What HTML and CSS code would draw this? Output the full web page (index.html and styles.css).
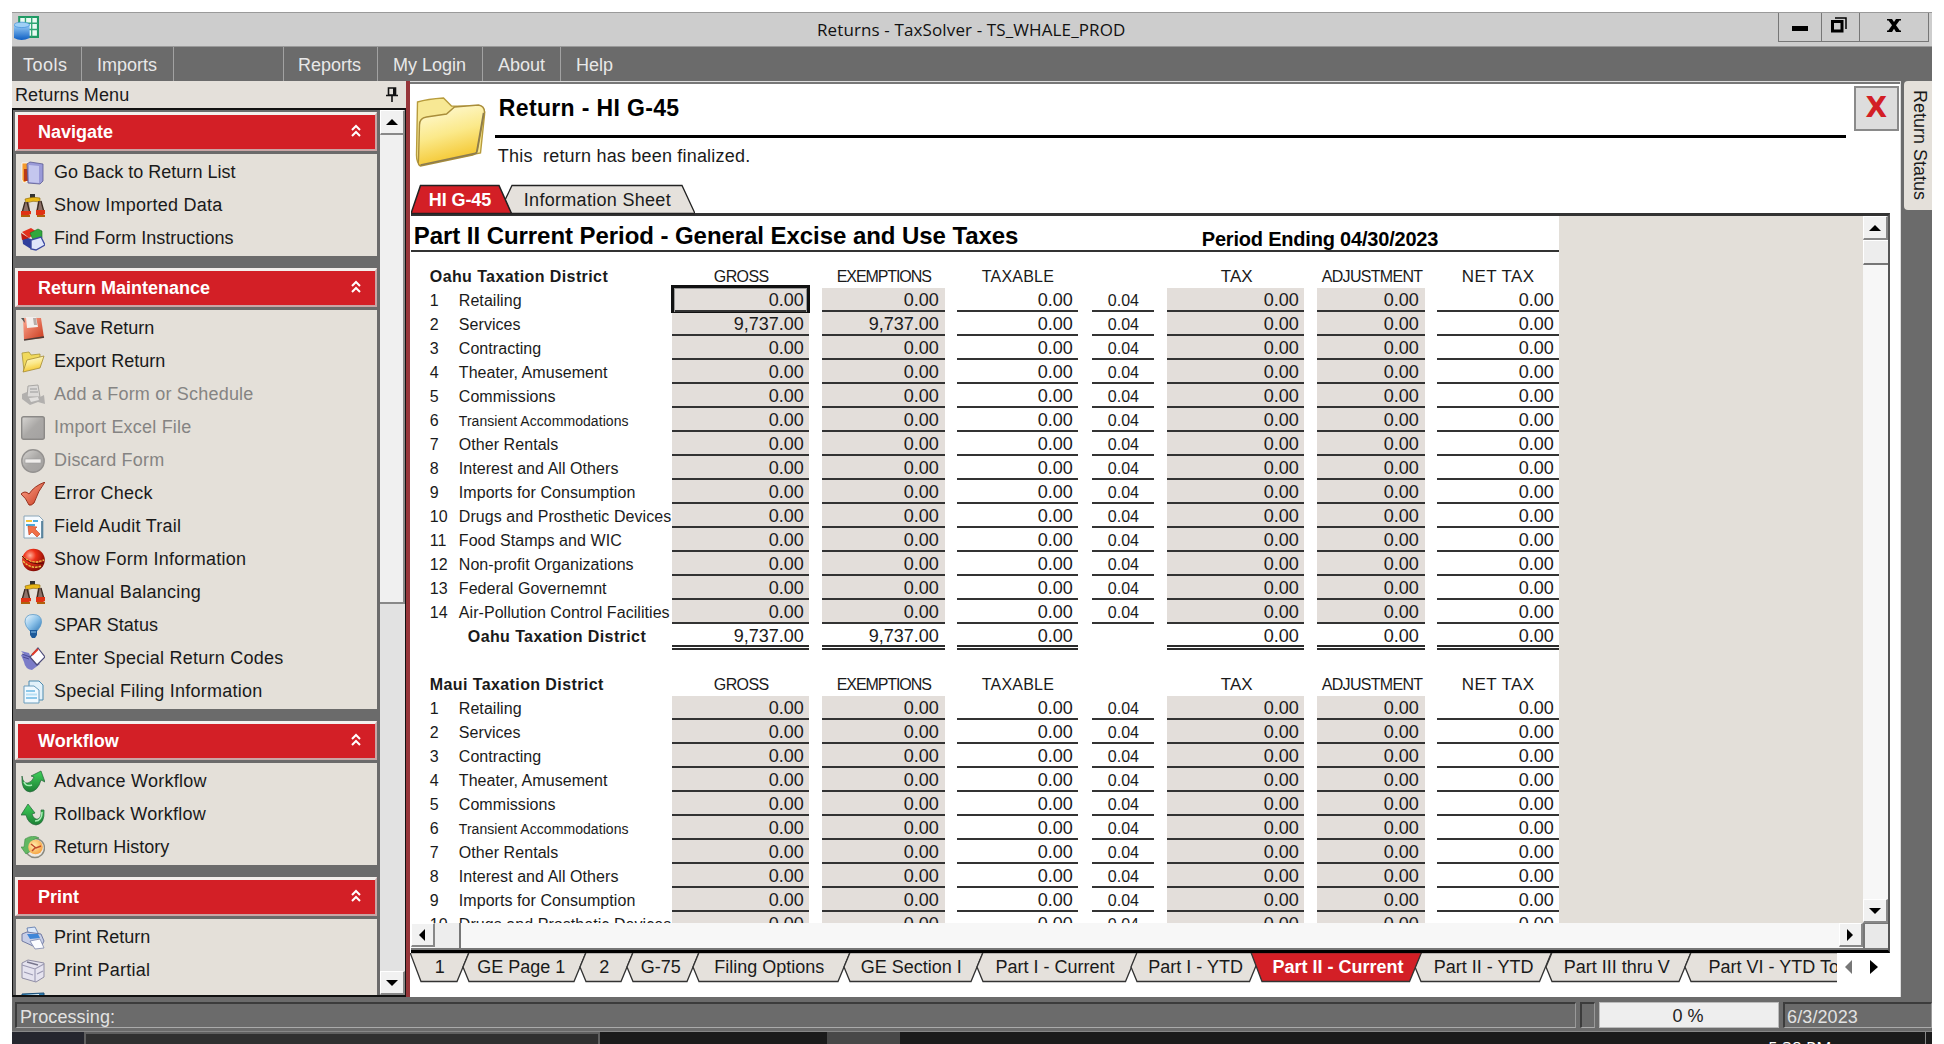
FILE: index.html
```html
<!DOCTYPE html>
<html lang="en">
<head>
<meta charset="utf-8">
<title>Returns - TaxSolver</title>
<link rel="stylesheet" href="styles.css">
</head>
<body>
<svg class="defs" width="0" height="0" aria-hidden="true">
  <defs>
    <linearGradient id="gFolder" x1="0" y1="0" x2="0.3" y2="1"><stop offset="0" stop-color="#fffce0"/><stop offset=".55" stop-color="#fbe98a"/><stop offset="1" stop-color="#f4c62e"/></linearGradient>
    <linearGradient id="gBlue" x1="0" y1="0" x2="0" y2="1"><stop offset="0" stop-color="#9fd2f8"/><stop offset="1" stop-color="#0f5fc4"/></linearGradient>
    <linearGradient id="gBulb" x1="0" y1="0" x2="1" y2="1"><stop offset="0" stop-color="#f4fbff"/><stop offset=".5" stop-color="#8fc4ea"/><stop offset="1" stop-color="#2f78b8"/></linearGradient>
    <linearGradient id="gRed" x1="0" y1="0" x2="1" y2="1"><stop offset="0" stop-color="#ffa890"/><stop offset="1" stop-color="#c8381c"/></linearGradient>
    <linearGradient id="gGreen" x1="0" y1="0" x2="0" y2="1"><stop offset="0" stop-color="#3fd05a"/><stop offset="1" stop-color="#1c7f34"/></linearGradient>
    <linearGradient id="gGray" x1="0" y1="0" x2="1" y2="1"><stop offset="0" stop-color="#d8d6d3"/><stop offset=".5" stop-color="#aaa8a6"/><stop offset="1" stop-color="#a3a1a0"/></linearGradient>
    <radialGradient id="gBall" cx=".35" cy=".3" r=".75"><stop offset="0" stop-color="#ffb09a"/><stop offset=".35" stop-color="#ee3018"/><stop offset="1" stop-color="#7e0a05"/></radialGradient>
    <radialGradient id="gClock" cx=".4" cy=".4" r=".7"><stop offset="0" stop-color="#fff0b0"/><stop offset="1" stop-color="#f59a35"/></radialGradient>
    <symbol id="chev" viewBox="0 0 10 13"><path d="M1 6 5 2l4 4M1 12l4-4 4 4" fill="none" stroke="#fff" stroke-width="2"/></symbol>
    <symbol id="scales" viewBox="0 0 24 24"><path d="M9 0h5v4H9z" fill="#333"/><path d="M4 5q8-3 15-1v4q-7-2-14 1z" fill="#e9b818" stroke="#8a6200" stroke-width=".6"/><path d="M4 8 1 18h8L8 8zM17 7l-2 11h8L20 7z" fill="#8d7168"/><path d="M4 8 1 19M6 8l3 11M18 7l-2 11M20 7l3 11" stroke="#3a2a20" stroke-width="1.300"/><path d="M0 17h10v3q-5 3-10 1zM15 16h9v4q-4 3-9 1z" fill="#e03214"/><path d="M0 21h9v2H0zM16 21h8v2h-8z" fill="#b0600c"/></symbol>
  </defs>
</svg>
<div class="window">
  <header class="titlebar">
    <svg class="app-icon" viewBox="0 0 24 24"><path d="M5 1h18v19H5z" fill="#eafaf2" stroke="#1f9a63" stroke-width="2"/><path d="M11 1v19M17 1v19M5 7h18M5 13h18" stroke="#2fa673" stroke-width="1.300"/><path d="M0 8v13q7 4 15 0V8z" fill="url(#gBlue)"/><ellipse cx="7.500" cy="8.500" rx="7.500" ry="2.600" fill="#9fd0f5" stroke="#3a8ad8" stroke-width=".6"/></svg>
    <h1 class="window-title">Returns - TaxSolver - TS_WHALE_PROD</h1>
    <div class="window-buttons">
      <span class="wb min"><svg width="16" height="6"><path d="M0 0h16v5H0z"/></svg></span>
      <span class="wb restore"><svg width="16" height="16" viewBox="0 0 16 16"><path d="M4 1h11v11" fill="none" stroke="#000" stroke-width="1.500"/><path d="M1.500 4.500h9.500v9.500H1.500z" fill="none" stroke="#000" stroke-width="3"/></svg></span>
      <span class="wb close"><svg width="14" height="13" viewBox="0 0 14 13"><path d="M0 0h5l2 3 2-3h5v1.500h-1.500L9 6.300l3.800 5.200H14V13H9L7 9.700 5 13H0v-1.500h1.300L5 6.300 1.500 1.500H0z"/></svg></span>
    </div>
  </header>

  <nav class="menubar">
    <span class="m tools">Tools</span><span class="m imports">Imports</span><span class="m blank"></span><span class="m reports">Reports</span><span class="m login">My Login</span><span class="m about">About</span><span class="m help">Help</span>
  </nav>

  <div class="workspace">
    <aside class="sidebar">
      <div class="side-head"><span>Returns Menu</span>
        <svg width="12" height="15" viewBox="0 0 12 15"><path d="M2.500 1h7v7h-7zM0 8.500h12M6 8v7" fill="none" stroke="#111" stroke-width="1.600"/><path d="M7 1h2.500v7H7z" fill="#111"/></svg>
      </div>
      <div class="side-body">
        <div class="groups">
          <h2 class="group-head">Navigate<svg class="chev"><use href="#chev"/></svg></h2>
          <ul class="group">
            <li class="tight"><svg viewBox="0 0 24 24"><path d="M1 2h7v17l-5 3-2-3z" fill="#f59a2c" stroke="#fff" stroke-width=".8"/><path d="M3 8h4v12H3z" fill="#b93a18"/><path d="m6 3 3-2 13 2v17l-3 3-12-1z" fill="#9a9ad8" stroke="#5b5a92" stroke-width=".8"/><path d="m8 4 10 1v17L8 21z" fill="#c4c6ee"/></svg>Go Back to Return List</li>
            <li><svg><use href="#scales"/></svg>Show Imported Data</li>
            <li class="tight"><svg viewBox="0 0 24 24"><path d="m1 5 9-4 6 4-8 6z" fill="#e3301c"/><path d="m9 6 8-4 4 2v7l-8 4z" fill="#31a83c" stroke="#156e22" stroke-width=".6"/><path d="m1 9 9 3v10L2 17z" fill="#2f3f9c"/><path d="m0 6 8 5-7 2z" fill="#c01a10"/><path d="m10 13 10-3 4 8-9 5-5-1z" fill="#dfe6fb" stroke="#3c4aa0" stroke-width="1.400"/></svg>Find Form Instructions</li>
          </ul>
          <h2 class="group-head">Return Maintenance<svg class="chev"><use href="#chev"/></svg></h2>
          <ul class="group">
            <li class="tight"><svg viewBox="0 0 24 24"><path d="m2 1 18 0 3 20-20 2z" fill="url(#gRed)"/><path d="m3 23 20-3" stroke="#4c3c38" stroke-width="1.600"/><path d="m5 0 10-0 2 10-11 1z" fill="#f2efed"/><path d="M12 1h3l1 7h-3z" fill="#b6aca8"/><path d="M0 1h3l1 5z" fill="#555"/></svg>Save Return</li>
            <li class="tight"><svg viewBox="0 0 24 24"><path d="m1 3 7-1 2 3 9-1v5L3 21z" fill="#f1d95c" stroke="#a89436" stroke-width=".8"/><path d="m6 10 17-4-4 12-17 4z" fill="url(#gFolder)" stroke="#a38a34" stroke-width=".8"/></svg>Export Return</li>
            <li class="off"><svg viewBox="0 0 24 24"><path d="m7 3 10-1 2 12H6z" fill="#dcdad8" stroke="#a9a7a4"/><path d="M9 6h7M9 9h8" stroke="#999" stroke-width="1.200"/><path d="m1 11 5-2v5h13l4-2 1 9-7-2-8 3-8-6z" fill="#b2b0ae"/><path d="m8 15 9-1 1 3-8 2z" fill="#e2e0de"/></svg>Add a Form or Schedule</li>
            <li class="off"><svg viewBox="0 0 24 24"><rect x=".7" y=".7" width="22.600" height="22.600" rx="2" fill="url(#gGray)" stroke="#8b8987" stroke-width="1.400"/></svg>Import Excel File</li>
            <li class="off"><svg viewBox="0 0 24 24"><circle cx="12" cy="12" r="11.200" fill="url(#gGray)" stroke="#949290" stroke-width="1.400"/><rect x="4" y="10" width="16" height="4" fill="#efedeb" stroke="#999" stroke-width=".6"/></svg>Discard Form</li>
            <li><svg viewBox="0 0 24 24"><path d="M0 12q4-4 8 0Q13 4 24 0 17 9 13 21q-3 3-5 2Q5 16 0 12z" fill="url(#gRed)" stroke="#8e2210" stroke-width=".9"/></svg>Error Check</li>
            <li><svg viewBox="0 0 24 24"><path d="M3 1h15l4 4v18H3z" fill="#f6fbff" stroke="#8aa6b8"/><path d="M5 5h6v2H5z" fill="#f4c33c"/><path d="M5 9h9v2H5zM12 5h5v2h-5z" fill="#49a9dc"/><path d="M21 6v17" stroke="#3a6b8a" stroke-width="1.500"/><path d="m7 11 9 1-2 2 5 5-3 3-5-5-3 3z" fill="#f07048" stroke="#c2401e" stroke-width=".6"/></svg>Field Audit Trail</li>
            <li><svg viewBox="0 0 24 24"><circle cx="12.500" cy="12" r="11.300" fill="url(#gBall)"/><path d="M2 9q9 8 21 3M2 13q8 9 19 5" fill="none" stroke="#ecc24a" stroke-width="1.500" stroke-dasharray="2.500 1"/><path d="M1 8q8 10 22 7" fill="none" stroke="#5c0a04" stroke-width="1"/></svg>Show Form Information</li>
            <li><svg><use href="#scales"/></svg>Manual Balancing</li>
            <li class="tight"><svg viewBox="0 0 24 24"><path d="M12 .5q8.500 0 8.500 7.500 0 4-4.500 9H9Q4 12 4 8q0-7.500 8-7.500z" fill="url(#gBulb)" stroke="#5d9bc8" stroke-width=".8"/><path d="M9 16h7v5l-2 3h-3l-2-3z" fill="#1d5a9a"/><path d="M10 18h5" stroke="#8cc4ee"/></svg>SPAR Status</li>
            <li><svg viewBox="0 0 24 24"><path d="m0 4 8 2 2 5 9 6-8 6q-7-1-8-8L0 8l3-1z" fill="#7b7cc8"/><path d="m1 7 8 3M2 10l6 2" stroke="#4a4b96"/><path d="m17 1 7 9-8 8-7-8z" fill="#fdfdff" stroke="#4b4a78" stroke-width="1.200"/><path d="m11 8 6-6" stroke="#e03a28" stroke-width="2"/></svg>Enter Special Return Codes</li>
            <li><svg viewBox="0 0 24 24"><path d="M8 1h10l4 4v15H8z" fill="#e2f1fa" stroke="#4c8bb0"/><path d="M3 6h10l5 4v13H3z" fill="#f0f9ff" stroke="#6a9dbd"/><path d="M5 11h9M5 18h11" stroke="#8cc8ea" stroke-width="2"/><path d="M5 14.500h11" stroke="#b9e0f4" stroke-width="2"/></svg>Special Filing Information</li>
          </ul>
          <h2 class="group-head">Workflow<svg class="chev"><use href="#chev"/></svg></h2>
          <ul class="group">
            <li><svg viewBox="0 0 24 24"><path d="M1 6q1 8 6 7 4-1 6-6l-3-1 10-5 4 11-4-2Q17 21 9 22 0 21 1 6z" fill="url(#gGreen)" stroke="#25633a" stroke-width=".7"/><path d="M3 12q2 5 8 3" stroke="#a6ecb4" stroke-width="1.500" fill="none"/></svg>Advance Workflow</li>
            <li><svg viewBox="0 0 24 24"><path d="M23 7q1 14-8 15Q7 21 5 12H0L7 1l7 9-3 1q2 6 6 5 4-2 3-9z" fill="url(#gGreen)" stroke="#25633a" stroke-width=".7"/><path d="M21 9q0 9-7 9" stroke="#a6ecb4" stroke-width="1.500" fill="none"/></svg>Rollback Workflow</li>
            <li class="tight"><svg viewBox="0 0 24 24"><circle cx="14" cy="12" r="9.500" fill="#ece9e2" stroke="#8a8a80" stroke-width="1.500"/><path d="M4 3q8-5 14-1Q9 3 8 11l2 4-5 3-5-7h3z" fill="#62b862" stroke="#3c8a44" stroke-width=".6"/><circle cx="14.500" cy="11" r="7.300" fill="url(#gClock)"/><path d="m10 8 5 4 5-2M14 12l-3 3" stroke="#c0492a" stroke-width="1.500" fill="none"/></svg>Return History</li>
          </ul>
          <h2 class="group-head">Print<svg class="chev"><use href="#chev"/></svg></h2>
          <ul class="group">
            <li class="tight"><svg viewBox="0 0 24 24"><path d="m6 2 8-1 4 8-10 2z" fill="#dce9fa" stroke="#5672a8" stroke-width=".8"/><path d="m1 8 5-2 14 2 3 7-2 4-9 1-11-5z" fill="#c7cee6" stroke="#66709c" stroke-width=".9"/><path d="m6 8 11 0 2 4-10 1z" fill="#3f86d8"/><path d="m9 15 10-2 4 9-9 1z" fill="#fbfcff" stroke="#7c86ac" stroke-width=".8"/></svg>Print Return</li>
            <li><svg viewBox="0 0 24 24"><path d="m1 4 6-3 16 3v14l-8 5-14-4z" fill="#e5e3ef" stroke="#8f8da4" stroke-width="1"/><path d="m1 6 13 4 9-5M14 10v13M3 13l9 3M16 15l6-3" stroke="#9b99b2" fill="none" stroke-width="1.100"/><path d="m6 3 11 3" stroke="#77758c" stroke-width="1.400"/></svg>Print Partial</li>
            <li><svg viewBox="0 0 24 24"><path d="m1 2 22-1 0 21H1z" fill="#2a7fb4" stroke="#1c4f78"/><path d="m4 3 14-1v4H4z" fill="#e8f4fb"/></svg></li>
          </ul>
        </div>
        <div class="vbar side-bar">
          <span class="sb-btn"><i class="tri up"></i></span>
          <span class="side-thumb"></span>
          <span class="sb-space"></span>
          <span class="sb-btn"><i class="tri down"></i></span>
        </div>
      </div>
    </aside>

    <main class="main">
      <div class="return-head">
        <svg class="folder" viewBox="0 0 72 70"><path d="M3 5q10-3 26-4l8 8q16 0 28 1 6 1 5 8l-4 38-60 12Q2 66 2 58z" fill="#f7e894" stroke="#b89c3c" stroke-width="1.400"/><path d="M5 28q0-7 7-8l20-3 8-7 24-2q6 1 6 7l-7 38q-1 4-5 5L6 69q-3-1-2-6z" fill="url(#gFolder)" stroke="#a98d3a" stroke-width="1.400"/><path d="m6 68 56-12 7-40" fill="none" stroke="#8c7c50" stroke-width="1.500"/></svg>
        <div class="return-info">
          <h2>Return - HI G-45</h2>
          <p>This  return has been finalized.</p>
        </div>
        <button class="close-form" type="button">X</button>
      </div>

      <div class="top-tabs">
        <svg class="tab-shapes" width="284" height="31" viewBox="0 0 284 31"><path d="M94 16 101 1.500H271L284 29.500H100z" fill="#e5e1dc" stroke="#222" stroke-width="1.300"/><path d="M0 29.500 9.500 1.500H88L100.500 29.500z" fill="#d31f26" stroke="#222" stroke-width="1.500"/></svg>
        <span class="tab-on">HI G-45</span><span class="tab-info">Information Sheet</span>
      </div>

      <div class="viewer">
        <div class="scroll-area">
          <section class="sheet">
            <div class="sheet-title"><h3>Part II Current Period - General Excise and Use Taxes</h3><h4>Period Ending 04/30/2023</h4></div>
            <div class="rows" id="rows"></div>
            <div class="selection"></div>
          </section>
          <div class="backdrop"></div>
          <div class="vbar form-vbar">
            <span class="sb-btn"><i class="tri up"></i></span>
            <span class="form-vthumb"></span>
            <span class="sb-space"></span>
            <span class="sb-btn"><i class="tri down"></i></span>
          </div>
        </div>
        <div class="hbar">
          <span class="sb-btn"><i class="tri left"></i></span>
          <span class="form-hthumb"></span>
          <span class="sb-space"></span>
          <span class="sb-btn"><i class="tri right"></i></span>
          <span class="corner"></span>
        </div>
      </div>

      <div class="sheet-tabs">
        <div class="strip" id="strip"></div>
        <i class="tri left dim"></i><i class="tri right"></i>
      </div>
    </main>

    <div class="right-dock"><span class="dock-tab">Return Status</span></div>
  </div>

  <footer class="statusbar">
    <span class="cell processing">Processing:</span>
    <span class="cell tiny"></span>
    <span class="cell percent">0 %</span>
    <span class="cell date">6/3/2023</span>
  </footer>
  <div class="taskbar">
    <span class="tk start"></span><span class="tk search"></span><span class="tk"></span><span class="tk active"></span>
    <span class="clock">5:38 PM</span><span class="peek"></span>
  </div>
</div>
<script src="app.js"></script>
</body>
</html>
```
FILE: styles.css
```css
* { box-sizing: border-box; }
body {
  margin: 0;
  width: 1944px;
  height: 1044px;
  overflow: hidden;
  background: #fff;
  font-family: "Liberation Sans", Arial, sans-serif;
  font-size: 18px;
  color: #1a1a1a;
}
h1, h2, h3, h4, p, ul { margin: 0; padding: 0; }
ul { list-style: none; }
.defs { position: absolute; }

.window {
  width: 1920px;
  height: 1032px;
  margin: 12px 0 0 12px;
  display: flex;
  flex-direction: column;
  background: #6b6b6b;
}

/* title bar */
.titlebar {
  height: 35px;
  flex: none;
  display: flex;
  align-items: flex-start;
  background: #cdcdcd;
  border-top: 1px solid #9a9a9a;
  border-bottom: 1px solid #999;
}
.app-icon { width: 25px; height: 25px; margin: 3px 0 0 2px; }
.window-title {
  flex: 1;
  padding-left: 778px;
  font: 400 17px/33px "Open Sans", sans-serif;
  letter-spacing: 0.12px;
  color: #111;
}
.window-buttons {
  display: flex;
  width: 151px;
  height: 29px;
  margin-right: 3px;
  border: 1px solid #777;
  border-top: 0;
}
.wb { display: flex; align-items: center; justify-content: center; padding-bottom: 3px; }
.min { width: 42px; padding-top: 7px; }
.restore { width: 39px; border: solid #777; border-width: 0 1px; padding: 0 3px 4px 0; }
.close { flex: 1; }

/* menu bar */
.menubar { height: 34px; flex: none; display: flex; color: #e8e8e8; line-height: 37px; }
.m { border-right: 1px solid #a2a2a2; padding-left: 15px; }
.tools { width: 70px; padding-left: 11px; letter-spacing: 0.5px; }
.imports { width: 92px; }
.blank { width: 110px; }
.reports { width: 94px; padding-left: 14px; }
.login { width: 105px; }
.about { width: 78px; }
.help { border: 0; }

.workspace { flex: 1; display: flex; min-height: 0; }

/* sidebar */
.sidebar { width: 394px; display: flex; flex-direction: column; }
.side-head {
  height: 27px;
  flex: none;
  display: flex;
  justify-content: space-between;
  align-items: center;
  padding: 0 8px 0 3px;
  line-height: 26px;
  letter-spacing: 0.1px;
  background: #e4e0da;
}
.side-body {
  flex: 1;
  min-height: 0;
  display: flex;
  justify-content: space-between;
  border: 1px solid #111;
  border-top-width: 2px;
  border-bottom-width: 2px;
}
.groups { width: 364px; padding: 2px 0 0 2px; overflow: hidden; }
.group-head {
  height: 39px;
  width: 362px;
  display: flex;
  justify-content: space-between;
  align-items: center;
  padding: 1px 14px 0 20px;
  background: #d31f26;
  border: solid #f3efec;
  border-width: 3px 2px 2px 3px;
  border-right-color: #c9a5a5;
  border-bottom-color: #c9a5a5;
  font-size: 18px;
  font-weight: 700;
  color: #fff;
}
.chev { width: 10px; height: 13px; margin-top: -5px; }
.group { margin: 3px 0 12px 1px; width: 361px; padding: 2px 0 1px; background: #e4e0d9; }
.group li { height: 33px; display: flex; align-items: center; gap: 9px; padding-left: 5px; white-space: nowrap; letter-spacing: 0.25px; }
.group li svg { width: 24px; height: 24px; flex: none; }
.group .tight { letter-spacing: 0.02px; }
.group .off { color: #858483; letter-spacing: 0.2px; }

/* scroll bars */
.vbar, .hbar { display: flex; }
.vbar { flex-direction: column; }
.sb-space { flex: 1; }
.sb-btn {
  width: 24px;
  height: 24px;
  flex: none;
  display: flex;
  align-items: center;
  justify-content: center;
  background: #f1f1f1;
  border: solid #fff;
  border-width: 1px 2px 2px 1px;
  border-right-color: #888;
  border-bottom-color: #888;
}
.tri { width: 0; height: 0; border: 6px solid transparent; }
.up { border-top: 0; border-bottom-color: #000; }
.down { border-bottom: 0; border-top-color: #000; }
.left { border-width: 6px 6px 6px 0; border-right-color: #000; }
.right { border-width: 6px 0 6px 6px; border-left-color: #000; }
.side-bar { width: 25px; background: #e2e2e2; }
.side-bar .sb-btn { width: 25px; }
.side-bar .sb-btn:first-child { height: 25px; }
.side-thumb { height: 469px; background: #f0f0f0; border: solid #888; border-width: 0 2px 2px 0; }

/* main panel */
.main {
  width: 1495px;
  display: flex;
  flex-direction: column;
  background: #fff;
  border-left: 4px solid #963539;
  box-shadow: inset 0 1px #ddd, inset 0 3px #777;
}
.return-head { height: 104px; flex: none; display: flex; padding-top: 5px; }
.folder { width: 73px; height: 70px; margin: 11px 0 0 4px; }
.return-info { width: 1351px; margin-left: 8px; }
.return-info h2 {
  height: 52px;
  padding: 8px 0 0 4px;
  border-bottom: 3px solid #000;
  font-size: 23px;
  line-height: 28px;
  letter-spacing: 0.35px;
  color: #000;
}
.return-info p { padding: 8px 0 0 3px; line-height: 21px; white-space: pre; letter-spacing: 0.2px; }
.close-form {
  width: 45px;
  height: 45px;
  margin-left: 8px;
  padding: 0 0 2px;
  background: #ddd;
  border: 2px solid #8a8a8a;
  font: 700 28px/38px "DejaVu Sans", sans-serif;
  color: #d31f26;
}
.top-tabs { height: 28px; flex: none; position: relative; line-height: 31px; white-space: nowrap; padding-left: 19px; letter-spacing: 0.3px; }
.tab-shapes { position: absolute; left: 1px; top: -1px; }
.top-tabs span { position: relative; }
.tab-on { display: inline-block; width: 95px; font-weight: 700; color: #fff; letter-spacing: -0.1px; }
.viewer { width: 1479px; height: 740px; flex: none; margin-left: 1px; border-top: 3px solid #333; border-right: 2px solid #555; border-bottom: 3px solid #000; }
.scroll-area { height: 707px; display: flex; overflow: hidden; }
.sheet { width: 1148px; position: relative; flex: none; }
.sheet-title { height: 36px; display: flex; border-bottom: 2px solid #333; color: #000; white-space: nowrap; }
.sheet-title h3 { width: 788px; padding: 4px 0 0 3px; font-size: 24px; line-height: 32px; letter-spacing: -0.06px; }
.sheet-title h4 { padding: 10px 0 0 3px; font-size: 20px; line-height: 26px; letter-spacing: -0.2px; }
.rows { padding-top: 12px; }
.row {
  display: grid;
  grid-template-columns: 29px 213px 137px 13px 123px 12px 121px 14px 62px 13px 137px 13px 108px 12px 122px;
  height: 24px;
  padding-left: 19px;
  line-height: 25px;
  white-space: nowrap;
}
.row span { height: 24px; }
.num { grid-column: 1; font-size: 16px; }
.label { grid-column: 2; font-size: 16px; line-height: 26px; letter-spacing: 0.06px; }
.small { font-size: 14px; }
.c-gross { grid-column: 3; }
.c-exempt { grid-column: 5; }
.c-taxable { grid-column: 7; }
.c-rate { grid-column: 9; }
.c-tax { grid-column: 11; }
.c-adjust { grid-column: 13; }
.c-net { grid-column: 15; }
.line .amount { text-align: right; padding-right: 5px; border-bottom: 2px solid #333; }
.line .c-exempt, .line .c-adjust { padding-right: 6px; }
.line .amount.c-rate { font-size: 16px; line-height: 26px; text-align: left; padding-left: 16px; }
.line .fill { background: #e3deda; }
.total .amount { text-align: right; padding-right: 5px; height: 26px; border-bottom: 5px double #2b2b2b; }
.total .c-exempt, .total .c-adjust { padding-right: 6px; }
.district { grid-column: 1 / span 2; font-size: 16px; font-weight: 700; letter-spacing: 0.4px; }
.total .district { padding-left: 38px; }
.head .c { font-size: 16px; }
.head .c-gross { padding-left: 42px; letter-spacing: -0.6px; }
.head .c-exempt { padding-left: 15px; letter-spacing: -1.1px; }
.head .c-taxable { padding-left: 25px; letter-spacing: 0.2px; }
.head .c-tax { padding-left: 54px; font-size: 17px; }
.head .c-adjust { padding-left: 5px; letter-spacing: -0.7px; }
.head .c-net { padding-left: 25px; font-size: 17px; letter-spacing: 0.4px; }
.selection {
  position: absolute;
  left: 260px;
  top: 69px;
  width: 139px;
  height: 28px;
  border: solid #111;
  border-width: 3px 3px 1px 3px;
  box-shadow: inset 0 1px #999, inset 1px 0 #999, inset -1px 0 #999;
}
.backdrop { flex: 1; background: #e3dfd9; }
.form-vbar { width: 25px; background: #f7f7f7; }
.form-vbar .sb-btn { width: 25px; }
.form-vthumb { height: 25px; background: #ededed; border-bottom: 2px solid #777; border-left: 1px solid #fff; border-top: 1px solid #fff; }
.hbar { height: 27px; background: #f7f7f7; border-bottom: 2px solid #777; }
.hbar .sb-btn { height: 24px; }
.form-hthumb { width: 26px; height: 25px; background: #ededed; border-right: 2px solid #777; }
.corner { width: 25px; height: 25px; background: #e9e9e9; border: solid #777; border-width: 1px 0 0 2px; }

/* sheet tabs */
.sheet-tabs { flex: 1; display: flex; align-items: flex-start; }
.strip { width: 1427px; height: 30px; display: flex; overflow: hidden; padding-left: 11px; margin-right: 8px; }
.tab { position: relative; flex: none; line-height: 29px; white-space: nowrap; }
.tab svg { position: absolute; top: -2px; left: -11px; overflow: visible; }
.tab span { position: relative; display: block; text-align: center; }
.tab.on { z-index: 1; color: #fff; font-weight: 700; }
.sheet-tabs > .tri { margin-top: 7px; border-top-width: 7px; border-bottom-width: 7px; }
.tri.left.dim { border-right-color: #777; border-right-width: 7px; margin-right: 18px; }
.dim + .right { border-left-width: 8px; }

/* right dock */
.right-dock { flex: 1; padding-left: 3px; border-left: 1px solid #ddd; }
.dock-tab {
  display: block;
  width: 28px;
  height: 129px;
  padding-top: 9px;
  writing-mode: vertical-rl;
  line-height: 24px;
  background: #e4e0da;
  border-radius: 4px 0 0 4px;
}

/* status bar */
.statusbar { height: 35px; flex: none; display: flex; gap: 4px; padding: 5px 0 4px 3px; color: #e2e2e2; border-bottom: 1px solid #888; }
.statusbar .cell { height: 26px; border: solid #3c3c3c; border-width: 2px 1px 1px 2px; border-right-color: #999; border-bottom-color: #aaa; line-height: 26px; }
.statusbar .processing { width: 1562px; padding-left: 3px; letter-spacing: 0.1px; }
.statusbar .tiny { width: 15px; }
.statusbar .percent { width: 180px; padding-right: 2px; text-align: center; background: #eee; color: #222; border: 1px solid #bbb; }
.statusbar .date { width: 149px; padding-left: 2px; letter-spacing: 0.1px; }

/* task bar */
.taskbar { height: 12px; flex: none; display: flex; background: #1b1b1b; overflow: hidden; }
.tk { width: 227px; }
.start { width: 72px; background: #25262e; }
.search { width: 516px; background: #303030; border: 1px solid #606060; border-width: 2px 2px 0; }
.active { width: 73px; background: #484848; }
.clock { margin-left: 868px; padding-top: 4px; width: 157px; font: 400 17px/24px "Open Sans", sans-serif; color: #fff; }
.peek { width: 1px; background: #888; }
```
FILE: app.js
```js
const categories = [
  'Retailing', 'Services', 'Contracting', 'Theater, Amusement', 'Commissions',
  'Transient Accommodations', 'Other Rentals', 'Interest and All Others',
  'Imports for Consumption', 'Drugs and Prosthetic Devices', 'Food Stamps and WIC',
  'Non-profit Organizations', 'Federal Governemnt', 'Air-Pollution Control Facilities'
];
const columns = ['gross', 'exempt', 'taxable', 'rate', 'tax', 'adjust', 'net'];
const headings = ['GROSS', 'EXEMPTIONS', 'TAXABLE', '', 'TAX', 'ADJUSTMENT', 'NET TAX'];
const editable = ['gross', 'exempt', 'tax', 'adjust'];

function district(name, amounts, count) {
  let html = `<div class="row head"><span class="district">${name} Taxation District</span>` +
    headings.map((h, i) => h ? `<span class="c c-${columns[i]}">${h}</span>` : '').join('') + '</div>';
  categories.slice(0, count).forEach((label, i) => {
    const small = label.startsWith('Transient') ? ' small' : '';
    html += `<div class="row line"><span class="num">${i + 1}</span><span class="label${small}">${label}</span>`;
    columns.forEach(c => {
      const value = c === 'rate' ? '0.04' : (amounts[i + 1] && amounts[i + 1][c]) || '0.00';
      html += `<span class="amount c-${c}${editable.includes(c) ? ' fill' : ''}">${value}</span>`;
    });
    html += '</div>';
  });
  if (count === categories.length) {
    html += `<div class="row total"><span class="district">${name} Taxation District</span>`;
    columns.filter(c => c !== 'rate').forEach(c => {
      html += `<span class="amount c-${c}">${(amounts.total && amounts.total[c]) || '0.00'}</span>`;
    });
    html += '</div><div class="row"></div>';
  }
  return html;
}

const filed = { gross: '9,737.00', exempt: '9,737.00' };
document.getElementById('rows').innerHTML =
  district('Oahu', { 2: filed, total: filed }, 14) + district('Maui', {}, 10);

// label, distance to the next tab, offset of the text centre
const tabs = [
  ['1', 48, 1], ['GE Page 1', 117, 0], ['2', 47, 1], ['G-75', 66, 1], ['Filing Options', 151, 1],
  ['GE Section I', 133, 1], ['Part I - Current', 154.5, 1], ['Part I - YTD', 124.5, 2],
  ['Part II - Current', 159.5, 2.5], ['Part II - YTD', 130.5, 3], ['Part III thru V', 139, 1.5],
  ['Part VI - YTD Totals', 200, 3]
];
document.getElementById('strip').innerHTML = tabs.map(([label, w, dx], i) => {
  const on = label === 'Part II - Current';
  const b = 30.5;
  const start = (i === 0 || on) ? `0,1.5 11,${b}` : `5,16 11,${b}`;
  const points = `${start} ${w - 1},${b} ${w + 11},1.5 ${i && !on ? '11,1.5' : ''}`;
  const fill = on ? '#d31f26' : '#e5e1dc';
  return `<div class="tab${on ? ' on' : ''}" style="width:${w}px">` +
    `<svg width="${w + 12}" height="32"><polygon points="${points}" fill="${fill}" stroke="#333" stroke-width="1.3"/></svg>` +
    `<span style="left:${dx - 6}px">${label}</span></div>`;
}).join('');
```
